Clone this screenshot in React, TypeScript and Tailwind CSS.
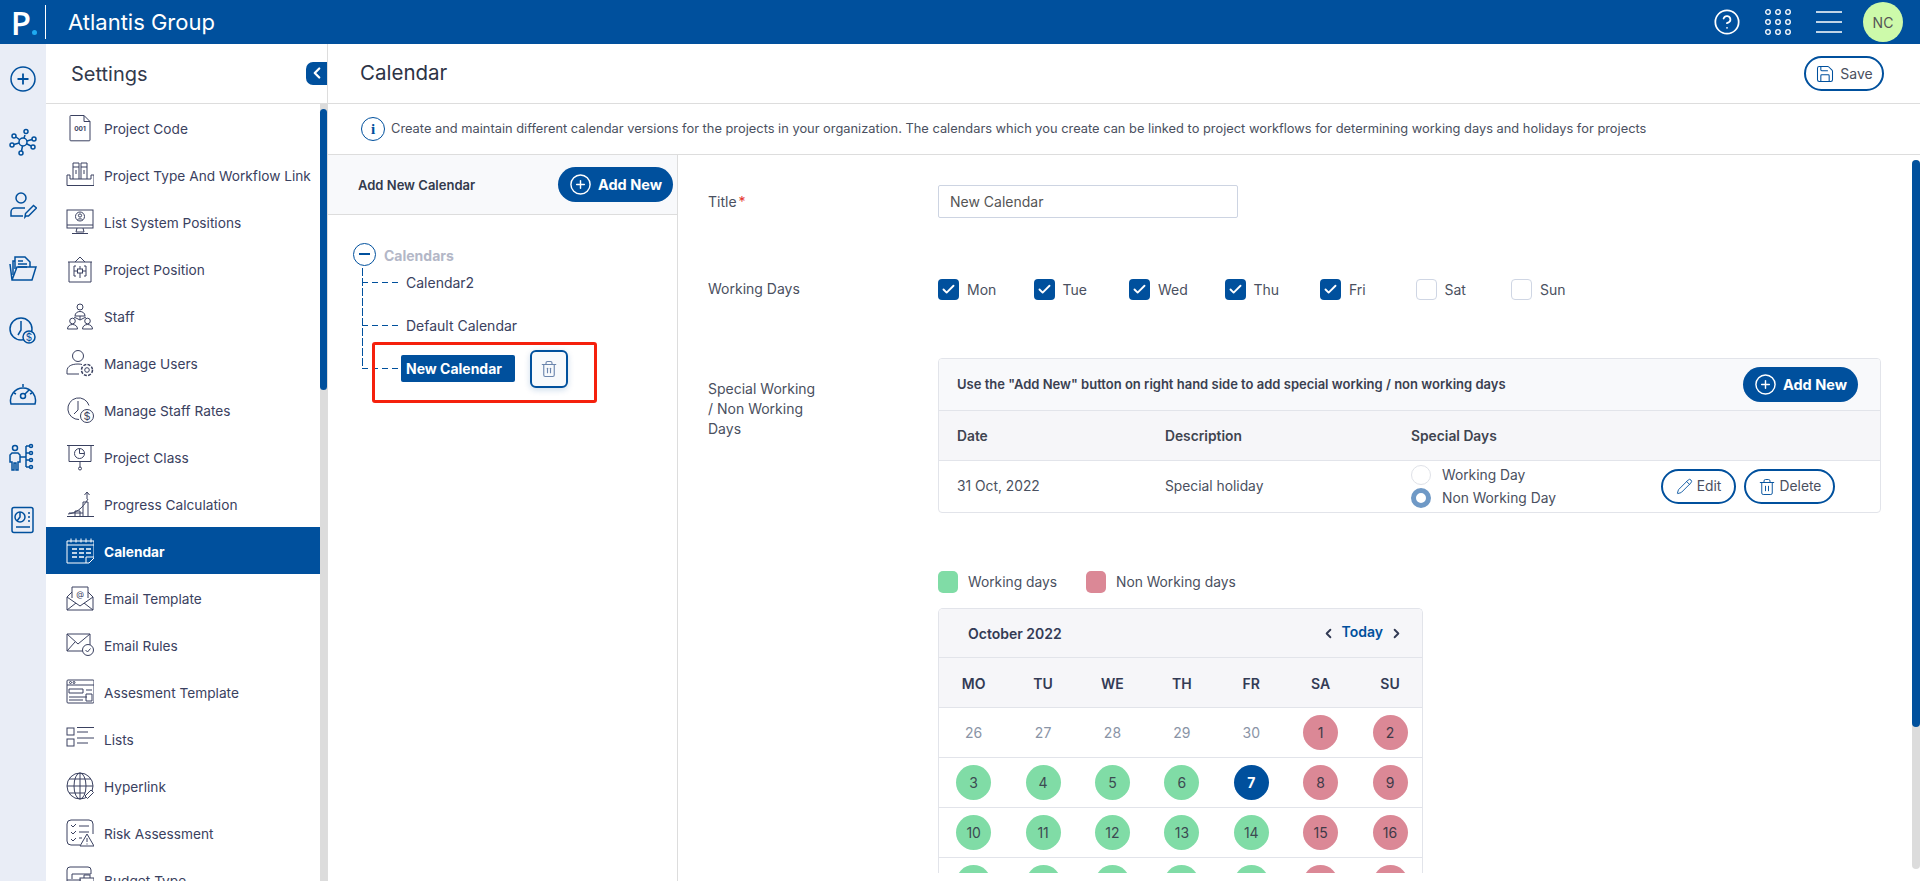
import { ChevronLeft, ChevronRight, CircleHelp, CirclePlus, Check, Pencil, Save, Trash2 } from 'lucide-react'
import type { ReactNode } from 'react'

const font = { fontFamily: 'Inter, "Liberation Sans", sans-serif' }

function Ico({ children, size = 28, stroke = 1 }: { children: ReactNode; size?: number; stroke?: number }) {
  return (
    <svg width={size} height={size} viewBox="0 0 28 28" fill="none" stroke="currentColor" strokeWidth={stroke} className="shrink-0">
      {children}
    </svg>
  )
}

const navItems: { label: string; icon: ReactNode }[] = [
  {
    label: 'Project Code',
    icon: (
      <>
        <path d="M4.800 1.500H18l6 6v18.500a.8.8 0 0 1-.8.8H4.800a.8.8 0 0 1-.8-.8V2.300a.8.8 0 0 1 .8-.8z" />
        <path d="M18 1.500v6h6" />
        <text x="14" y="17" textAnchor="middle" fontSize="6.500" fontWeight="700" fill="currentColor" stroke="none">001</text>
      </>
    ),
  },
  {
    label: 'Project Type And Workflow Link',
    icon: (
      <>
        <path d="M1 14v10.500h27V14h-3v4H4v-4z" />
        <path d="M7 18V2h6v16M15 18V2h6v16M7 6h6M15 6h6M10 9v4M18 9v4" />
      </>
    ),
  },
  {
    label: 'List System Positions',
    icon: (
      <>
        <rect x="1" y="2" width="26" height="18" />
        <path d="M1 17h26M11 20l-1 4h8l-1-4M6 25.500h16" />
        <circle cx="14" cy="8.500" r="4.500" />
        <circle cx="14" cy="7.500" r="1.600" />
        <path d="M11.300 12c.6-1.600 4.800-1.600 5.400 0" />
      </>
    ),
  },
  {
    label: 'Project Position',
    icon: (
      <>
        <path d="M2 7h24M3 7v20h22V7M9 7l5-5 5 5" />
        <rect x="11.500" y="14" width="5" height="4" />
        <path d="M11.500 16H8M16.500 16H20M8 11v10M20 11v10M8 11h2M8 21h2M18 11h2M18 21h2M14 11v3M14 18v5" />
      </>
    ),
  },
  {
    label: 'Staff',
    icon: (
      <>
        <circle cx="14" cy="5" r="3" />
        <path d="M9 14c0-6 10-6 10 0zM14 14v4M14 18l-6-3M14 18l6-3" />
        <circle cx="6.500" cy="19" r="2.800" />
        <path d="M1.500 27c0-6 10-6 10 0z" />
        <circle cx="21.500" cy="19" r="2.800" />
        <path d="M16.500 27c0-6 10-6 10 0z" />
      </>
    ),
  },
  {
    label: 'Manage Users',
    icon: (
      <>
        <circle cx="12" cy="7" r="5.500" />
        <path d="M1 25v-3c0-5 5-7 11-7 1.500 0 3 .2 4 .5M1 25h12" />
        <circle cx="21" cy="21" r="2.300" />
        <circle cx="21" cy="21" r="5.500" strokeDasharray="3 1.300" strokeWidth="1.500" />
      </>
    ),
  },
  {
    label: 'Manage Staff Rates',
    icon: (
      <>
        <path d="M13 23.500a10.800 10.800 0 1 1 10-14" />
        <path d="M12 5v9l-4 4" />
        <circle cx="21" cy="20" r="6.500" />
        <text x="21" y="24" textAnchor="middle" fontSize="11" fill="currentColor" stroke="none">$</text>
      </>
    ),
  },
  {
    label: 'Project Class',
    icon: (
      <>
        <path d="M1 2.500h27M3 2.500v16h22v-16M14 18.500v6" />
        <circle cx="14" cy="25.500" r="1.500" />
        <circle cx="13.500" cy="10.500" r="5" />
        <path d="M13.500 5.500v5h5" />
      </>
    ),
  },
  {
    label: 'Progress Calculation',
    icon: (
      <>
        <path d="M1 26.500h27M2 24c8-1 14-5 20-15M17 26V12h5v14M9 26v-5h5v5M3 23h14" />
        <path d="M21 9l0-6M18.500 5l2.500-3 2.500 3" />
      </>
    ),
  },
  {
    label: 'Calendar',
    icon: (
      <>
        <path d="M1 4h27v17l-5 5H1z" />
        <path d="M1 8h27M5 1.500v4M10 1.500v4M15 1.500v4M20 1.500v4M25 1.500v4" />
        <path d="M6 12h5M13 12h5M20 12h5M6 16h5M13 16h5M20 16h5M6 20h5M13 20h5" strokeWidth="1.500" />
        <path d="M20 26v-6h8" />
      </>
    ),
  },
  {
    label: 'Email Template',
    icon: (
      <>
        <path d="M6 14V3h16v11M6 8l-5 5v13h26V13l-5-5M1 13l13 9 13-9M1 26l9-7M27 26l-9-7" />
        <text x="14" y="13" textAnchor="middle" fontSize="8" fill="currentColor" stroke="none">@</text>
      </>
    ),
  },
  {
    label: 'Email Rules',
    icon: (
      <>
        <path d="M20 20H1V3h23v11M1 3l11 10L24 3M1 20l8-9" />
        <circle cx="22" cy="19" r="5.500" fill="#fff" />
        <path d="M19.500 19l2 2 3-3.500" />
      </>
    ),
  },
  {
    label: 'Assesment Template',
    icon: (
      <>
        <rect x="1" y="2" width="27" height="23" rx="1" />
        <path d="M1 7h27M3 11h14v4H3zM20 12h6M20 16h6v7h-6zM3 19h18M3 22h14" />
        <circle cx="4.500" cy="4.500" r="1" />
        <circle cx="8" cy="4.500" r="1" />
      </>
    ),
  },
  {
    label: 'Lists',
    icon: (
      <>
        <rect x="1" y="3" width="7" height="7" />
        <rect x="1" y="14" width="7" height="7" />
        <path d="M11 2.500h17M11 7h11M11 13h17M11 18h11" />
      </>
    ),
  },
  {
    label: 'Hyperlink',
    icon: (
      <>
        <circle cx="14" cy="14" r="13" />
        <ellipse cx="14" cy="14" rx="6" ry="13" />
        <path d="M14 1v26M1 14h26M3 7h22M3 21h16" />
        <path d="M19 24l6-6 2.500 2.500-6 6z" fill="#fff" />
      </>
    ),
  },
  {
    label: 'Risk Assessment',
    icon: (
      <>
        <path d="M14 26H5a4 4 0 0 1-4-4V5a4 4 0 0 1 4-4h18a4 4 0 0 1 4 4v10" />
        <path d="M5 6l2 2 3-3M5 13l2 2 3-3M5 20l2 2 3-3M13 7h10M13 13h10M13 19h3" />
        <path d="M21 15l7 12H14z" fill="#fff" />
        <path d="M21 19v4M21 24.500v1" />
      </>
    ),
  },
  {
    label: 'Budget Type',
    icon: (
      <>
        <path d="M1 26V4a3 3 0 0 1 3-3h18a3 3 0 0 1 3 3v4H6M6 8v5M1 14h14M1 20h8" />
        <rect x="14" y="12" width="14" height="12" />
        <path d="M18 12V9h6v3M14 17h14" />
      </>
    ),
  },
]

const railIcons: ReactNode[] = [
  <>
    <circle cx="14" cy="14" r="12" />
    <path d="M14 8.500v11M8.500 14h11" strokeWidth="1.800" />
  </>,
  <>
    <circle cx="14" cy="14" r="4" />
    <circle cx="5" cy="8" r="2" />
    <circle cx="3" cy="17" r="2" />
    <circle cx="17" cy="3.500" r="2" />
    <circle cx="25" cy="11" r="2" />
    <circle cx="24" cy="19" r="2" />
    <circle cx="12" cy="25" r="2" />
    <path d="M7 9l4 3M5 16.500l5-1.500M16 7l-1 3M23 11.500l-5 1.500M22 18l-5-2.500M12.500 23l1-5" />
  </>,
  <>
    <circle cx="12" cy="7" r="5" />
    <path d="M16 17H6a4 4 0 0 0-4 4v4h12" />
    <path d="M17 25l-1 1 .5-3.500 8-8 3 2.500-8 8z" />
  </>,
  <>
    <path d="M4 21V7h2" />
    <path d="M6 15V3h10l5 5v5" />
    <path d="M9 7h5M9 10h9M9 13h9" />
    <path d="M1 10l2 16h20l4-13H8l-5 13" />
  </>,
  <>
    <circle cx="12" cy="12" r="11" />
    <path d="M12 4v9l-3 5" />
    <circle cx="20" cy="20" r="6" fill="#e9edf6" />
    <text x="20" y="24" textAnchor="middle" fontSize="10" fill="currentColor" stroke="none">$</text>
  </>,
  <>
    <path d="M2 24a12.500 12.500 0 1 1 24 0z" />
    <circle cx="14" cy="16" r="2.500" />
    <path d="M16 14l4-4M14 4v3M5 13l2 1M23 13l-2 1" />
  </>,
  <>
    <circle cx="6" cy="5" r="2.500" />
    <path d="M3 10h6l2 2v7h-2v8H7v-7H5v7H3v-8H1v-7z" />
    <path d="M17 3v21M11 14h6M17 3h3M17 10h3M17 17h3M17 24h3" />
    <circle cx="22" cy="3" r="1.500" />
    <circle cx="22" cy="10" r="1.500" />
    <circle cx="22" cy="17" r="1.500" />
    <circle cx="22" cy="24" r="1.500" />
  </>,
  <>
    <rect x="3" y="1.500" width="21" height="25" rx="2" />
    <circle cx="11" cy="11" r="5" />
    <path d="M11 6v5l-3 4M19 7h2M19 11h2M19 15h2M7 21h14" />
  </>,
]

const weekDays = ['MO', 'TU', 'WE', 'TH', 'FR', 'SA', 'SU']

const calRows: { day: number; kind: 'off' | 'work' | 'rest' | 'today' }[][] = [
  [
    { day: 26, kind: 'off' },
    { day: 27, kind: 'off' },
    { day: 28, kind: 'off' },
    { day: 29, kind: 'off' },
    { day: 30, kind: 'off' },
    { day: 1, kind: 'rest' },
    { day: 2, kind: 'rest' },
  ],
  [
    { day: 3, kind: 'work' },
    { day: 4, kind: 'work' },
    { day: 5, kind: 'work' },
    { day: 6, kind: 'work' },
    { day: 7, kind: 'today' },
    { day: 8, kind: 'rest' },
    { day: 9, kind: 'rest' },
  ],
  [
    { day: 10, kind: 'work' },
    { day: 11, kind: 'work' },
    { day: 12, kind: 'work' },
    { day: 13, kind: 'work' },
    { day: 14, kind: 'work' },
    { day: 15, kind: 'rest' },
    { day: 16, kind: 'rest' },
  ],
  [
    { day: 17, kind: 'work' },
    { day: 18, kind: 'work' },
    { day: 19, kind: 'work' },
    { day: 20, kind: 'work' },
    { day: 21, kind: 'work' },
    { day: 22, kind: 'rest' },
    { day: 23, kind: 'rest' },
  ],
]

const dayClass = {
  off: 'text-[#8a94a6]',
  work: 'bg-[#80dca6] text-[#3c4a52]',
  rest: 'bg-[#db8896] text-[#3f3a48]',
  today: 'bg-[#00509d] font-bold text-white',
}

function AddNewButton() {
  return (
    <button className="flex h-[35px] w-[115px] items-center justify-center gap-[6px] rounded-full bg-[#00509d] text-[14.500px] font-bold text-white">
      <CirclePlus size={23} strokeWidth={1.5} />
      Add New
    </button>
  )
}

function Day({ label, on }: { label: string; on: boolean }) {
  return (
    <label className="flex w-[95.5px] items-center gap-2 text-[14px] text-[#4a5060]">
      {on ? (
        <span className="flex h-[21px] w-[21px] items-center justify-center rounded-[4px] bg-[#00509d] text-white">
          <Check size={15} strokeWidth={3} />
        </span>
      ) : (
        <span className="h-[21px] w-[21px] rounded-[4px] border border-[#cfd6e4] bg-white" />
      )}
      {label}
    </label>
  )
}

function SettingsNav() {
  return (
    <aside className="flex w-[282px] shrink-0 flex-col border-r border-[#dddddd] bg-white">
      <div className="flex h-[60px] shrink-0 items-center justify-between border-b border-[#dddddd] pl-[25px]">
        <span className="text-[20px] text-[#333a4d]">Settings</span>
        <button className="mb-[1px] flex h-[23px] w-[21px] items-center justify-center rounded-l-[7px] bg-[#00509d] text-white">
          <ChevronLeft size={18} strokeWidth={3} />
        </button>
      </div>
      <div className="flex min-h-0 flex-1">
        <ul className="min-w-0 flex-1 overflow-hidden">
          {navItems.map((item) => {
            const active = item.label === 'Calendar'
            return (
              <li
                key={item.label}
                className={`flex h-[47px] items-center gap-[10px] pl-5 text-[13.700px] whitespace-nowrap ${
                  active ? 'bg-[#00509d] font-bold text-white' : 'text-[#3a4160]'
                }`}
              >
                <Ico>{item.icon}</Ico>
                <span className="pt-[4px]">{item.label}</span>
              </li>
            )
          })}
        </ul>
        <div className="w-[7px] shrink-0 bg-[#dcdcdc]">
          <div className="mt-[5px] h-[281px] rounded-full bg-[#00509d]" />
        </div>
      </div>
    </aside>
  )
}

function TreeDash() {
  return <span className="h-px w-[36px] bg-[repeating-linear-gradient(90deg,#00509d_0_6px,transparent_6px_10px)]" />
}

function CalendarTree() {
  return (
    <div className="relative flex-1 pt-[26px] pl-[25px]">
      <div className="flex h-[26px] items-center gap-2">
        <span className="flex h-[23px] w-[23px] items-center justify-center rounded-full border-[1.5px] border-[#00509d]">
          <span className="h-[1.5px] w-[11px] bg-[#00509d]" />
        </span>
        <span className="pt-[3px] text-[14px] font-bold text-[#b3b7c7]">Calendars</span>
      </div>
      <div className="relative ml-[9px] -mt-[6px] w-[280px]">
        <div className="absolute top-[7px] left-0 h-[100px] w-px bg-[repeating-linear-gradient(180deg,#00509d_0_8px,transparent_8px_10px)]" />
        <div className="flex h-[43px] items-center">
          <TreeDash />
          <span className="pl-2 text-[14px] text-[#3a4160]">Calendar2</span>
        </div>
        <div className="flex h-[43px] items-center">
          <TreeDash />
          <span className="pl-2 text-[14px] text-[#3a4160]">Default Calendar</span>
        </div>
        <div className="flex h-[43px] items-center">
          <TreeDash />
          <span className="ml-[3px] flex h-[27px] w-[114px] items-center rounded-[2px] bg-[#00509d] pl-[5px] text-[14px] font-bold text-white">
            New Calendar
          </span>
          <span className="ml-[15px] flex h-[38px] w-[38px] shrink-0 items-center justify-center rounded-[6px] border-2 border-[#00509d] bg-[#f7f9fc] text-[#6b85ad] shadow-[0_2px_6px_rgba(0,80,157,0.2)]">
            <Trash2 size={18} strokeWidth={1.5} />
          </span>
        </div>
        {/* annotation drawn on top of the screenshot */}
        <div className="absolute top-[81px] left-[10px] h-[61px] w-[225px] rounded-[3px] border-[3px] border-[#f5200c]" />
      </div>
    </div>
  )
}

function SpecialDays() {
  return (
    <div className="w-[943px] overflow-hidden rounded-[4px] border border-[#e2e4ea] bg-white text-[13.800px] text-[#4a5060]">
      <div className="flex h-[52px] items-center justify-between border-b border-[#e2e4ea] bg-[#f8f9fb] pr-[22px] pl-[18px]">
        <span className="text-[13px] font-semibold text-[#3a4050]">
          Use the "Add New" button on right hand side to add special working / non working days
        </span>
        <AddNewButton />
      </div>
      <div className="grid h-[50px] grid-cols-[208px_246px_1fr] items-center border-b border-[#e2e4ea] bg-[#f6f6f9] pt-[1px] pl-[18px] font-semibold text-[#3f4450]">
        <span>Date</span>
        <span>Description</span>
        <span>Special Days</span>
      </div>
      <div className="grid h-[51px] grid-cols-[208px_246px_250px_1fr] items-center pl-[18px]">
        <span>31 Oct, 2022</span>
        <span>Special holiday</span>
        <div className="flex flex-col gap-[3px]">
          <span className="flex h-[20px] items-center gap-[11px]">
            <span className="h-[20px] w-[20px] rounded-full border border-[#dfe2e8] bg-white" />
            Working Day
          </span>
          <span className="flex h-[20px] items-center gap-[11px]">
            <span className="h-[20px] w-[20px] rounded-full border-[5px] border-[#6f99c6] bg-white" />
            Non Working Day
          </span>
        </div>
        <div className="flex gap-[8px]">
          <button className="flex h-[35px] w-[75px] items-center justify-center gap-1 rounded-full border-2 border-[#00509d] bg-white">
            <Pencil size={17} strokeWidth={1.25} className="text-[#00509d]" />
            Edit
          </button>
          <button className="flex h-[35px] w-[91px] items-center justify-center gap-1 rounded-full border-2 border-[#00509d] bg-white">
            <Trash2 size={18} strokeWidth={1.25} className="text-[#00509d]" />
            Delete
          </button>
        </div>
      </div>
    </div>
  )
}

function MonthCalendar() {
  return (
    <div className="w-[485px] overflow-hidden rounded-t-[5px] border border-b-0 border-[#e2e4ea] bg-white text-[14px]">
      <div className="flex h-[49px] items-center justify-between border-b border-[#e2e4ea] bg-[#f6f6f9] pr-[18px] pl-[29px]">
        <span className="font-semibold text-[#333b55]">October 2022</span>
        <span className="flex items-center gap-[6px] font-semibold text-[#00509d]">
          <ChevronLeft size={15} strokeWidth={3} className="text-[#333b55]" />
          <span className="-mt-1">Today</span>
          <ChevronRight size={15} strokeWidth={3} className="text-[#333b55]" />
        </span>
      </div>
      <div className="grid h-[50px] grid-cols-[repeat(7,69.4px)] items-center border-b border-[#e2e4ea] bg-[#f6f6f9] pt-[1px] text-center font-semibold text-[#333b55]">
        {weekDays.map((d) => (
          <span key={d}>{d}</span>
        ))}
      </div>
      {calRows.map((row, i) => (
        <div key={i} className="grid h-[50px] grid-cols-[repeat(7,69.4px)] items-center border-b border-[#e2e4ea]">
          {row.map((c) => (
            <div key={c.day} className="flex justify-center">
              {/* the fourth row is cut by the panel before its numbers start */}
              <span className={`flex h-[35px] w-[35px] items-center justify-center rounded-full ${dayClass[c.kind]}`}>
                {i < 3 ? c.day : null}
              </span>
            </div>
          ))}
        </div>
      ))}
    </div>
  )
}

function CalendarForm() {
  return (
    <div className="flex min-w-0 flex-1">
      <div className="mb-[8px] min-w-0 flex-1 overflow-hidden pt-[30px] pl-[30px] text-[14px] text-[#4a5060]">
        <div className="flex h-[33px] items-center">
          <span className="w-[230px]">
            Title<span className="ml-[2px] text-[#e5342b]">*</span>
          </span>
          <div className="flex h-[33px] w-[300px] items-center rounded-[2px] border border-[#cdd4e2] pl-[11px] text-[#555]">
            New Calendar
          </div>
        </div>
        <div className="mt-[54px] flex h-[33px] items-center">
          <span className="w-[230px]">Working Days</span>
          <div className="flex pt-[2px]">
            {['Mon', 'Tue', 'Wed', 'Thu', 'Fri'].map((d) => (
              <Day key={d} label={d} on />
            ))}
            {['Sat', 'Sun'].map((d) => (
              <Day key={d} label={d} on={false} />
            ))}
          </div>
        </div>
        <div className="mt-[53px] flex">
          <span className="mt-[21px] w-[230px] leading-5">
            Special Working
            <br />/ Non Working
            <br />
            Days
          </span>
          <div>
            <SpecialDays />
            <div className="mt-[59px] flex h-[20px] items-center text-[13.800px]">
              <span className="h-[22px] w-[20px] rounded-[5px] bg-[#80dca6]" />
              <span className="ml-[10px] w-[118px]">Working days</span>
              <span className="h-[22px] w-[20px] rounded-[5px] bg-[#db8896]" />
              <span className="ml-[10px]">Non Working days</span>
            </div>
            <div className="mt-[16px]">
              <MonthCalendar />
            </div>
          </div>
        </div>
      </div>
      <div className="mt-[5px] mb-[12px] w-[8px] shrink-0 rounded-full bg-[#dcdcdc]">
        <div className="h-[567px] rounded-full bg-[#00509d]" />
      </div>
    </div>
  )
}

export default function App() {
  return (
    <div className="flex h-screen w-full flex-col overflow-hidden bg-white" style={font}>
      <header className="flex h-[44px] shrink-0 items-center bg-[#00509d] text-white">
        <div className="flex h-[34px] w-[46px] items-center justify-end border-r border-white pr-[8px]">
          <span className="text-[33px] leading-none font-semibold" style={{ fontFamily: '"Open Sans", sans-serif' }}>P</span>
          <span className="mt-[21px] ml-[1px] h-[5px] w-[5px] rounded-full bg-[#1eaaf1]" />
        </div>
        <span className="ml-[22px] text-[22px]">Atlantis Group</span>
        <div className="ml-auto flex items-center">
          <CircleHelp size={28} strokeWidth={1.5} />
          <svg width="26" height="26" viewBox="0 0 26 26" fill="none" stroke="currentColor" strokeWidth="1.3" className="ml-[24px]">
            {[3, 13, 23].flatMap((y) =>
              [3, 13, 23].map((x) => <circle key={`${x}-${y}`} cx={x} cy={y} r="2.300" />),
            )}
          </svg>
          <svg width="26" height="24" viewBox="0 0 26 24" stroke="currentColor" strokeWidth="1.6" className="ml-[25px]">
            <path d="M0 2h26M0 12h26M0 22h26" />
          </svg>
          <span className="mr-[17px] ml-[21px] flex h-[40px] w-[40px] items-center justify-center rounded-full bg-[#cdfaaa] text-[14px] text-[#555]">
            NC
          </span>
        </div>
      </header>

      <div className="flex min-h-0 flex-1">
        <nav className="flex w-[46px] shrink-0 flex-col items-center gap-[35px] bg-[#e9edf6] pt-[21px] text-[#00509d]">
          {railIcons.map((icon, i) => (
            <Ico key={i} stroke={1.5}>{icon}</Ico>
          ))}
        </nav>

        <SettingsNav />

        <main className="flex min-w-0 flex-1 flex-col">
          <div className="flex h-[60px] shrink-0 items-center justify-between border-b border-[#dddddd] pr-[36px] pl-[32px]">
            <h1 className="text-[20.500px] text-[#2c3345]">Calendar</h1>
            <button className="flex h-[35px] w-[80px] items-center justify-center gap-[5px] rounded-full border-2 border-[#00509d] bg-white text-[14px] text-[#4a5060]">
              <Save size={20} strokeWidth={1.25} className="text-[#00509d]" />
              Save
            </button>
          </div>
          <div className="flex h-[51px] shrink-0 items-center gap-[6px] border-b border-[#dddddd] pl-[33px] text-[12.850px] text-[#4a5060]">
            <span
              className="flex h-[24px] w-[24px] items-center justify-center rounded-full border-[1.5px] border-[#00509d] text-[15px] font-bold text-[#00509d]"
              style={{ fontFamily: '"Liberation Serif", serif' }}
            >
              i
            </span>
            Create and maintain different calendar versions for the projects in your organization. The calendars which you create can be linked to project workflows for determining working days and holidays for projects
          </div>
          <div className="flex min-h-0 flex-1">
            <section className="flex w-[350px] shrink-0 flex-col border-r border-[#dddddd]">
              <div className="flex h-[60px] shrink-0 items-center justify-between border-b border-[#dddddd] bg-[#f8f9fb] pr-[4px] pl-[30px]">
                <span className="pt-[3px] text-[13px] font-semibold text-[#333a4d]">Add New Calendar</span>
                <AddNewButton />
              </div>
              <CalendarTree />
            </section>
            <CalendarForm />
          </div>
        </main>
      </div>
    </div>
  )
}
